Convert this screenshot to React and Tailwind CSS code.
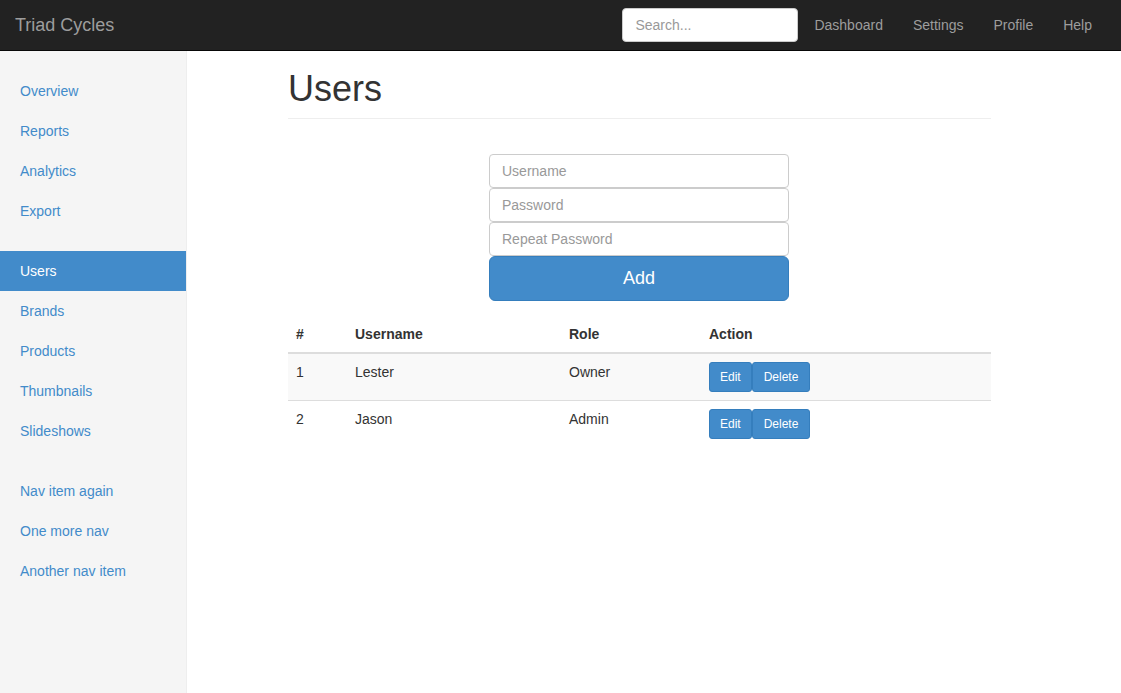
import React from 'react';

const navGroups = [
  ['Overview', 'Reports', 'Analytics', 'Export'],
  ['Users', 'Brands', 'Products', 'Thumbnails', 'Slideshows'],
  ['Nav item again', 'One more nav', 'Another nav item'],
];

const topLinks = ['Dashboard', 'Settings', 'Profile', 'Help'];

const users = [
  { id: 1, name: 'Lester', role: 'Owner' },
  { id: 2, name: 'Jason', role: 'Admin' },
];

const App = () => {
  return (
    <div className="min-h-screen flex flex-col bg-white text-[14px] text-[#333] font-['Liberation_Sans',Arial,sans-serif]">
      {/* Top navbar */}
      <header className="h-[51px] shrink-0 bg-[#222] border-b border-[#080808] flex items-center pl-[15px]">
        <span className="text-[18px] leading-5 text-[#9d9d9d]">Triad Cycles</span>
        <div className="ml-auto flex items-center h-full">
          <input
            type="text"
            placeholder="Search..."
            className="w-[176px] h-[34px] px-3 bg-white rounded-[4px] border border-[#ccc] text-[14px] text-[#555] placeholder:text-[#999] outline-none"
          />
          <nav className="flex h-full pl-[1px]">
            {topLinks.map((link) => (
              <a key={link} href="#" className="px-[15px] flex items-center text-[#9d9d9d] leading-5">
                {link}
              </a>
            ))}
          </nav>
          <div className="w-[14px]" />
        </div>
      </header>

      <div className="flex flex-1">
        {/* Sidebar */}
        <aside className="w-[187px] shrink-0 bg-[#f5f5f5] border-r border-[#eee] pt-5">
          {navGroups.map((group, gi) => (
            <ul key={gi} className="mb-5">
              {group.map((item) => (
                <li key={item}>
                  <a
                    href="#"
                    className={
                      item === 'Users'
                        ? 'block px-5 py-[10px] leading-5 bg-[#428bca] text-white'
                        : 'block px-5 py-[10px] leading-5 text-[#428bca]'
                    }
                  >
                    {item}
                  </a>
                </li>
              ))}
            </ul>
          ))}
        </aside>

        {/* Main */}
        <main className="flex-1">
          <div className="ml-[101px] w-[703px]">
            <h1 className="mt-[18px] pb-[9px] border-b border-[#eee] text-[36px] leading-[1.1] text-[#333]">Users</h1>

            <form className="mt-[35px] ml-[201px] w-[300px] flex flex-col" onSubmit={(e) => e.preventDefault()}>
              <input
                type="text"
                placeholder="Username"
                className="h-[34px] px-3 border border-[#ccc] rounded-[4px] text-[14px] placeholder:text-[#999] outline-none"
              />
              <input
                type="password"
                placeholder="Password"
                className="h-[34px] px-3 border border-[#ccc] rounded-[4px] text-[14px] placeholder:text-[#999] outline-none"
              />
              <input
                type="password"
                placeholder="Repeat Password"
                className="h-[34px] px-3 border border-[#ccc] rounded-[4px] text-[14px] placeholder:text-[#999] outline-none"
              />
              <button
                type="submit"
                className="h-[45px] bg-[#428bca] border border-[#357ebd] rounded-[6px] text-white text-[18px]"
              >
                Add
              </button>
            </form>

            <table className="mt-[15px] w-full">
              <thead>
                <tr>
                  <th className="w-[59px] p-2 leading-5 text-left font-bold border-b-2 border-[#ddd]">#</th>
                  <th className="w-[214px] p-2 leading-5 text-left font-bold border-b-2 border-[#ddd]">Username</th>
                  <th className="w-[140px] p-2 leading-5 text-left font-bold border-b-2 border-[#ddd]">Role</th>
                  <th className="p-2 leading-5 text-left font-bold border-b-2 border-[#ddd]">Action</th>
                </tr>
              </thead>
              <tbody>
                {users.map((u, i) => (
                  <tr key={u.id} className={i % 2 === 0 ? 'bg-[#f9f9f9]' : ''}>
                    <td className="p-2 leading-5 align-top border-t border-[#ddd]">{u.id}</td>
                    <td className="p-2 leading-5 align-top border-t border-[#ddd]">{u.name}</td>
                    <td className="p-2 leading-5 align-top border-t border-[#ddd]">{u.role}</td>
                    <td className="p-2 leading-5 align-top border-t border-[#ddd]">
                      <div className="flex">
                        <button className="h-[30px] px-[10px] text-[12px] text-white bg-[#428bca] border border-[#357ebd] rounded-[3px]">
                          Edit
                        </button>
                        <button className="h-[30px] px-[11px] text-[12px] text-white bg-[#428bca] border border-[#357ebd] rounded-[3px]">
                          Delete
                        </button>
                      </div>
                    </td>
                  </tr>
                ))}
              </tbody>
            </table>
          </div>
        </main>
      </div>
    </div>
  );
};

export default App;
